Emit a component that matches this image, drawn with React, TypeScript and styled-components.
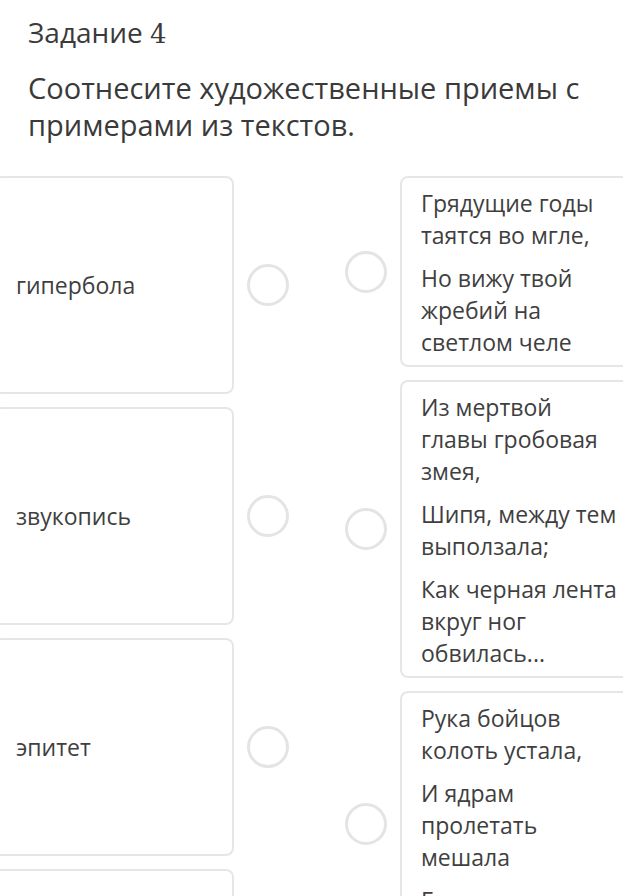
import React from 'react';
import styled, { createGlobalStyle } from 'styled-components';

const GlobalStyle = createGlobalStyle`
  html, body {
    margin: 0;
    padding: 0;
    background: #ffffff;
    overflow: hidden;
  }
  body {
    font-family: "Open Sans", "Noto Sans", sans-serif;
    color: #3b3b3b;
  }
`;

const Page = styled.div`
  width: 623px;
  height: 896px;
  overflow: hidden;
`;

const Header = styled.div`
  padding: 14px 28px 0;
`;

const Title = styled.h1`
  margin: 0;
  font-size: 28px;
  line-height: 36px;
  font-weight: 400;
  color: #3a3a3a;
`;

const Num = styled.span`
  font-family: "DejaVu Serif", "Liberation Serif", serif;
  font-size: 26px;
`;

const Question = styled.p`
  margin: 17px 0 0;
  font-size: 29px;
  line-height: 37px;
  color: #3a3a3a;
`;

const Match = styled.div`
  display: flex;
  gap: 56px;
  margin-top: 33px;
  margin-left: -6px;
`;

const Column = styled.div`
  display: flex;
  flex-direction: column;
  gap: 13px;
  flex-shrink: 0;
`;

const Row = styled.div`
  display: flex;
  align-items: center;
  gap: 13px;
`;

const Card = styled.div`
  box-sizing: border-box;
  border: 2px solid #e4e7e9;
  border-radius: 8px;
  background: #ffffff;
  font-size: 23px;
  line-height: 32px;
  color: #3f3f3f;
`;

const TermCard = styled(Card)`
  width: 240px;
  height: 218px;
  padding: 0 20px;
  display: flex;
  align-items: center;
`;

const ExampleCard = styled(Card)`
  width: 240px;
  padding: 9px 19px 7px;
`;

const Line = styled.p`
  margin: 0;
  & + & {
    margin-top: 11px;
  }
`;

const Dot = styled.div`
  box-sizing: border-box;
  width: 42px;
  height: 42px;
  flex-shrink: 0;
  border: 3px solid #e2e4e6;
  border-radius: 50%;
`;

const terms = ['гипербола', 'звукопись', 'эпитет', 'метафора'];

const examples: string[][] = [
  ['Грядущие годы таятся во мгле,', 'Но вижу твой жребий на светлом челе'],
  ['Из мертвой главы гробовая змея,', 'Шипя, между тем выползала;', 'Как черная лента вкруг ног обвилась...'],
  ['Рука бойцов колоть устала,', 'И ядрам пролетать мешала', 'Гора кровавых тел.'],
];

const App: React.FC = () => {
  return (
    <Page>
      <GlobalStyle />
      <Header>
        <Title>
          Задание <Num>4</Num>
        </Title>
        <Question>Соотнесите художественные приемы с примерами из текстов.</Question>
      </Header>
      <Match>
        <Column>
          {terms.map((term) => (
            <Row key={term}>
              <TermCard>{term}</TermCard>
              <Dot />
            </Row>
          ))}
        </Column>
        <Column>
          {examples.map((lines) => (
            <Row key={lines[0]}>
              <Dot />
              <ExampleCard>
                {lines.map((l) => (
                  <Line key={l}>{l}</Line>
                ))}
              </ExampleCard>
            </Row>
          ))}
        </Column>
      </Match>
    </Page>
  );
};

export default App;
